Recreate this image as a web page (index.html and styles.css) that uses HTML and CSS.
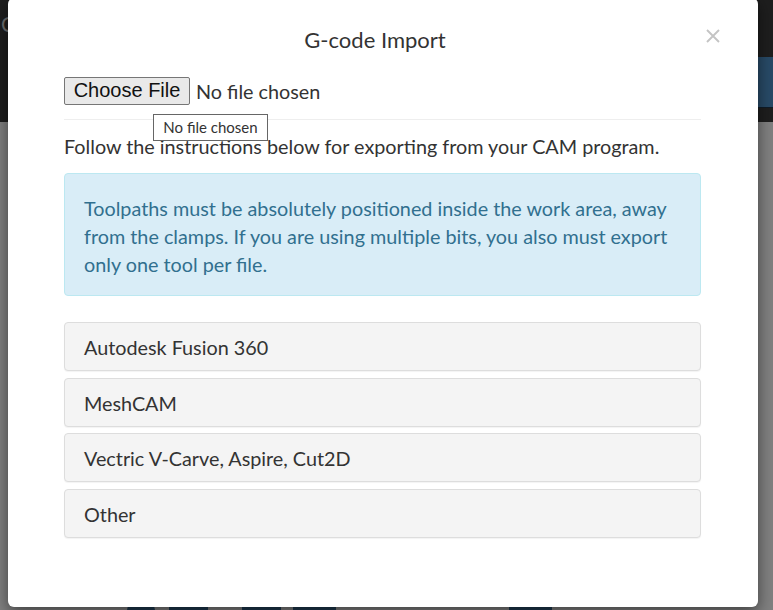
FILE: index.html
```html
<!DOCTYPE html>
<html>
<head>
<meta charset="utf-8">
<title>G-code Import</title>
<link rel="stylesheet" href="styles.css">
</head>
<body>
<div class="page">
  <div class="navbar">
    <span class="brand">C</span>
    <span class="navbtn"></span>
  </div>
  <div class="backdrop">
    <div class="shapes">
      <span class="shape s1"></span>
      <span class="shape s2"></span>
      <span class="shape s3"></span>
      <span class="shape s4"></span>
      <span class="shape s5"></span>
    </div>
  </div>
</div>

<div class="modal">
  <div class="modal-header">
    <h4 class="modal-title">G-code Import</h4>
    <button class="close" aria-label="Close">
      <svg width="14" height="14" viewBox="0 0 14 14"><path d="M1 1L13 13M13 1L1 13" stroke="#c4c4c4" stroke-width="1.9" fill="none"/></svg>
    </button>
  </div>
  <div class="modal-body">
    <div class="file-row">
      <span class="file-btn">Choose File</span>
      <span class="file-label">No file chosen</span>
      <span class="tooltip">No file chosen</span>
    </div>
    <hr class="divider">
    <p class="intro">Follow the instructions below for exporting from your CAM program.</p>
    <div class="alert">Toolpaths must be absolutely positioned inside the work area, away from the clamps. If you are using multiple bits, you also must export only one tool per file.</div>
    <div class="panel-group">
      <div class="panel">Autodesk Fusion 360</div>
      <div class="panel">MeshCAM</div>
      <div class="panel">Vectric V-Carve, Aspire, Cut2D</div>
      <div class="panel">Other</div>
    </div>
  </div>
</div>
</body>
</html>
```

FILE: styles.css
```css
html, body {
  margin: 0;
  padding: 0;
  height: 100%;
  overflow: hidden;
}
body {
  font-family: Lato, "Open Sans", sans-serif;
  color: #333;
  background: #808080;
}
.page {
  display: flex;
  flex-direction: column;
  height: 610px;
}
.navbar {
  height: 122px;
  background: #1e1e1e;
  display: flex;
  align-items: flex-start;
  flex-shrink: 0;
}
.brand {
  font-family: Lato, sans-serif;
  font-size: 21px;
  color: #6e6e6e;
  margin-left: 1px;
  margin-top: 10px;
  line-height: 28px;
}
.navbtn {
  margin-left: auto;
  margin-top: 57px;
  width: 40px;
  height: 50px;
  background: #284a67;
  border-bottom: 1px solid #0f1c28;
}
.backdrop {
  flex: 1;
  background: #808080;
  display: flex;
  flex-direction: column;
  justify-content: flex-end;
}
.shapes {
  display: flex;
  height: 10px;
  align-items: flex-end;
}
.shape {
  display: block;
  height: 10px;
  background: #1f3a50;
}
.s1 { margin-left: 127px; width: 28px; border-radius: 14px 14px 0 0; }
.s2 { margin-left: 14px; width: 39px; }
.s3 { margin-left: 34px; width: 39px; }
.s4 { margin-left: 12px; width: 43px; }
.s5 { margin-left: 173px; width: 43px; }

.modal {
  position: absolute;
  left: 8px;
  top: -2px;
  width: 750px;
  height: 609px;
  background: #fff;
  border-radius: 6px;
  box-shadow: 0 5px 15px rgba(0, 0, 0, 0.5);
  box-sizing: border-box;
}
.modal-header {
  display: flex;
  align-items: flex-start;
  padding: 27px 38px 0 56px;
}
.modal-title {
  flex: 1;
  margin: 0;
  text-align: center;
  font-size: 22px;
  font-weight: 400;
  line-height: 30px;
  color: #333;
}
.close {
  margin-left: 20px;
  margin-top: 4px;
  padding: 0;
  border: 0;
  background: transparent;
  width: 14px;
  height: 14px;
  display: block;
}
.close svg { display: block; }

.modal-body {
  padding: 22px 57px 0 56px;
}
.file-row {
  position: relative;
  display: flex;
  align-items: center;
  height: 28px;
}
.file-btn {
  box-sizing: border-box;
  height: 28px;
  width: 126px;
  background: #e9e9e9;
  border: 1px solid #767676;
  border-radius: 2px;
  font-family: "Liberation Sans", Arial, sans-serif;
  font-size: 20px;
  line-height: 25px;
  text-align: center;
  color: #111;
}
.file-label {
  margin-left: 6px;
  font-size: 19.8px;
  line-height: 27px;
  color: #333;
}
.tooltip {
  position: absolute;
  left: 89px;
  top: 37px;
  z-index: 2;
  box-sizing: border-box;
  width: 115px;
  height: 27px;
  border: 1px solid #666;
  background: #fff;
  font-size: 15px;
  line-height: 25px;
  text-align: center;
  color: #333;
}
.divider {
  border: 0;
  border-top: 1px solid #eee;
  margin: 14px 0 0;
  height: 0;
}
.intro {
  margin: 12px 0 0;
  font-size: 19.8px;
  line-height: 28px;
}
.alert {
  margin-top: 13px;
  padding: 20px 19px 17px;
  background: #d9edf7;
  border: 1px solid #bce8f1;
  border-radius: 4px;
  color: #31708f;
  font-size: 19.8px;
  line-height: 28px;
}
.panel-group {
  margin-top: 26px;
  display: flex;
  flex-direction: column;
  gap: 6.67px;
}
.panel {
  box-sizing: border-box;
  height: 49px;
  padding: 1px 19px 0;
  background: #f4f4f4;
  border: 1px solid #ddd;
  border-radius: 4px;
  box-shadow: 0 1px 1px rgba(0, 0, 0, 0.05);
  font-size: 19.8px;
  line-height: 47px;
  color: #333;
}
```
